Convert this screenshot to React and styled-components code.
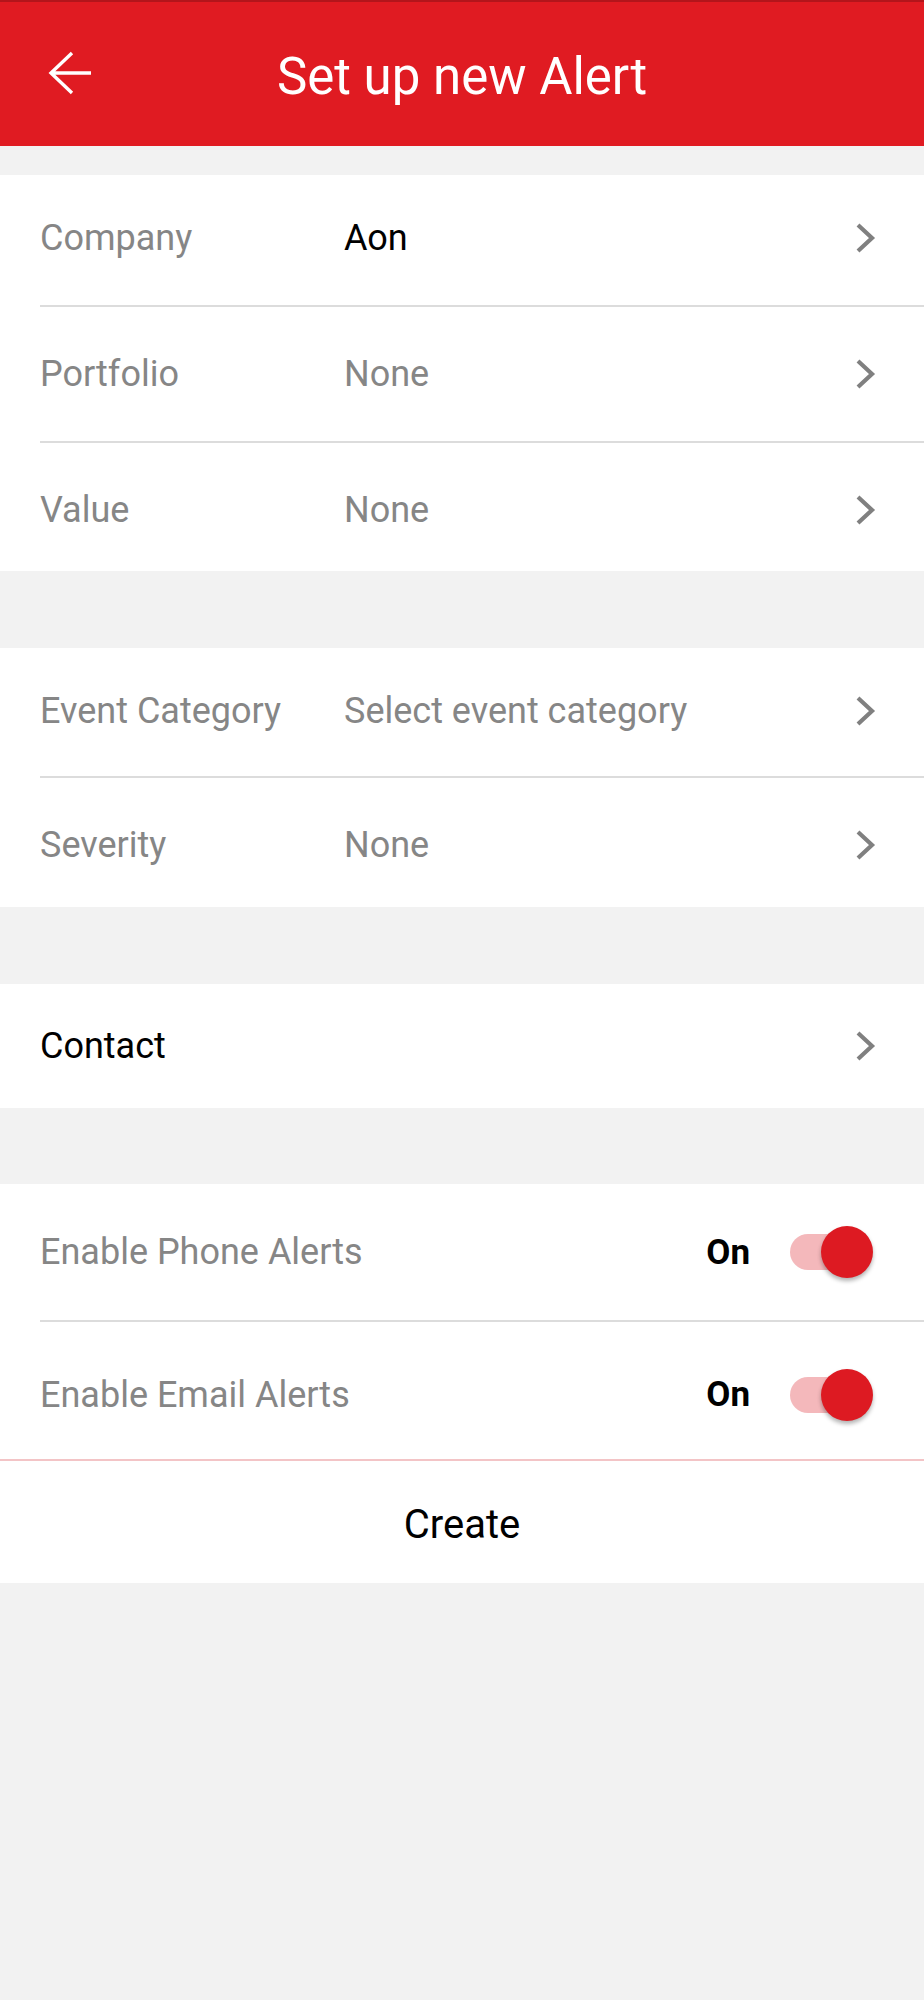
import React from "react";
import styled, { createGlobalStyle } from "styled-components";

const Global = createGlobalStyle`
  html, body { margin: 0; padding: 0; background: #f2f2f2; }
  body { font-family: Roboto, "Noto Sans", Arial, sans-serif; -webkit-font-smoothing: antialiased; }
  * { box-sizing: border-box; }
`;

const Page = styled.div`
  min-height: 2000px;
  background: #f2f2f2;
  display: flex;
  flex-direction: column;
`;

const Header = styled.header`
  height: 146px;
  background: #e01b22;
  border-top: 2px solid #b3151b;
  display: flex;
  align-items: center;
  position: relative;
  padding: 0 0 0 46px;
`;

const BackButton = styled.button`
  border: 0;
  background: transparent;
  padding: 0;
  width: 48px;
  height: 48px;
  display: flex;
  align-items: center;
  justify-content: center;
  margin-top: -2px;
`;

const Title = styled.h1`
  position: absolute;
  left: 0;
  right: 0;
  top: 0;
  bottom: 0;
  margin: 0;
  display: flex;
  align-items: center;
  justify-content: center;
  color: #ffffff;
  font-size: 51px;
  font-weight: 400;
  pointer-events: none;
  padding-top: 4px;
`;

const Section = styled.section`
  background: #ffffff;
  margin-top: ${(p) => p.$gap}px;
  display: flex;
  flex-direction: column;
`;

const Row = styled.div`
  height: ${(p) => p.$h}px;
  display: grid;
  grid-template-columns: 304px 1fr auto;
  align-items: center;
  padding-left: 40px;
  padding-right: 47px;
  padding-top: ${(p) => Math.max(p.$shift || 0, 0)}px;
  padding-bottom: ${(p) => Math.max(-(p.$shift || 0), 0)}px;
`;

const Label = styled.span`
  font-size: 36px;
  color: ${(p) => (p.$dark ? "#000000" : "#868686")};
`;

const Value = styled.span`
  font-size: 36px;
  color: ${(p) => (p.$dark ? "#000000" : "#868686")};
`;

const Divider = styled.div`
  height: 2px;
  background: ${(p) => (p.$pink ? "#f3c4c6" : "#dcdcdc")};
  margin-left: ${(p) => (p.$full ? 0 : 40)}px;
`;

const ToggleRow = styled.div`
  height: ${(p) => p.$h}px;
  display: flex;
  align-items: center;
  padding-left: 40px;
  padding-right: 51px;
  padding-top: ${(p) => p.$shift || 0}px;
`;

const ToggleLabel = styled.span`
  flex: 1;
  font-size: 36px;
  color: #868686;
`;

const OnText = styled.span`
  font-size: 35px;
  font-weight: 700;
  color: #000000;
  margin-right: 40px;
`;

const Switch = styled.div`
  position: relative;
  width: 83px;
  height: 52px;
`;

const Track = styled.div`
  position: absolute;
  left: 0;
  top: 8px;
  width: 70px;
  height: 36px;
  border-radius: 18px;
  background: #f4b8bb;
`;

const Thumb = styled.div`
  position: absolute;
  right: 0;
  top: 0;
  width: 52px;
  height: 52px;
  border-radius: 50%;
  background: #dd1a22;
  box-shadow: 0 3px 4px rgba(0, 0, 0, 0.3);
`;

const CreateRow = styled.button`
  height: 122px;
  border: 0;
  background: #ffffff;
  font-family: inherit;
  font-size: 40px;
  color: #000000;
  display: flex;
  align-items: center;
  justify-content: center;
  padding: 4px 0 0;
`;

const Chevron = () => (
  <svg width="22" height="32" viewBox="0 0 22 32" fill="none">
    <path d="M3 3 L17 16 L3 29" stroke="#808080" strokeWidth="4.2" strokeLinejoin="miter" />
  </svg>
);

const BackArrow = () => (
  <svg width="46" height="46" viewBox="0 0 46 46" fill="none">
    <path d="M44 23 H4 M25 3 L4 23 L25 43" stroke="#ffffff" strokeWidth="3.4" />
  </svg>
);

const NavRow = ({ label, value, darkValue, darkLabel, h = 130, shift }) => (
  <Row $h={h} $shift={shift}>
    <Label $dark={darkLabel}>{label}</Label>
    <Value $dark={darkValue}>{value}</Value>
    <Chevron />
  </Row>
);

const Toggle = ({ label, h, shift }) => (
  <ToggleRow $h={h} $shift={shift}>
    <ToggleLabel>{label}</ToggleLabel>
    <OnText>On</OnText>
    <Switch>
      <Track />
      <Thumb />
    </Switch>
  </ToggleRow>
);

export default function App() {
  return (
    <Page>
      <Global />
      <Header>
        <BackButton aria-label="Back">
          <BackArrow />
        </BackButton>
        <Title>Set up new Alert</Title>
      </Header>

      <Section $gap={29}>
        <NavRow label="Company" value="Aon" darkValue h={130} shift={-4} />
        <Divider />
        <NavRow label="Portfolio" value="None" h={134} />
        <Divider />
        <NavRow label="Value" value="None" h={128} shift={6} />
      </Section>

      <Section $gap={77}>
        <NavRow label="Event Category" value="Select event category" h={128} shift={-2} />
        <Divider />
        <NavRow label="Severity" value="None" h={129} shift={4} />
      </Section>

      <Section $gap={77}>
        <NavRow label="Contact" value="" darkLabel h={124} />
      </Section>

      <Section $gap={76}>
        <Toggle label="Enable Phone Alerts" h={136} />
        <Divider />
        <Toggle label="Enable Email Alerts" h={137} shift={8} />
        <Divider $pink $full />
        <CreateRow>Create</CreateRow>
      </Section>
    </Page>
  );
}
